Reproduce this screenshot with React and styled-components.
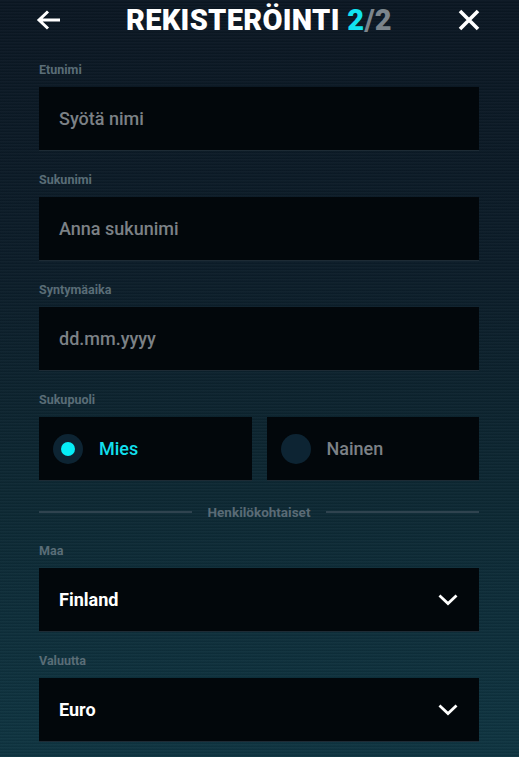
import React from "react";
import styled, { createGlobalStyle } from "styled-components";

const Global = createGlobalStyle`
  html, body { margin: 0; padding: 0; }
  body {
    width: 519px;
    height: 757px;
    overflow: hidden;
    font-family: Roboto, "Liberation Sans", sans-serif;
    background:
      repeating-linear-gradient(180deg, rgba(255,255,255,0.025) 0px, rgba(255,255,255,0.025) 1px, rgba(0,0,0,0.06) 2px, rgba(0,0,0,0.06) 3px),
      linear-gradient(180deg, #0b1723 0%, #0c1d29 35%, #0d2833 65%, #0f3542 100%);
  }
`;

const Page = styled.div`
  width: 519px;
  height: 757px;
  display: flex;
  flex-direction: column;
`;

const Header = styled.header`
  height: 40px;
  display: flex;
  align-items: center;
  justify-content: space-between;
  padding: 0 37px 0 36px;
`;

const IconButton = styled.button`
  background: none;
  border: none;
  padding: 0;
  width: 26px;
  height: 26px;
  display: flex;
  align-items: center;
  justify-content: center;
  color: #fff;
`;

const Title = styled.h1`
  margin: 0;
  font-size: 29px;
  font-weight: 900;
  color: #fff;
  letter-spacing: 0.3px;
  line-height: 1;
  margin-top: 1px;
`;

const Step = styled.span`
  color: #12e3ef;
`;

const Total = styled.span`
  color: #7b858c;
`;

const Form = styled.div`
  padding: 0 40px 0 39px;
  display: flex;
  flex-direction: column;
`;

const Field = styled.div`
  display: flex;
  flex-direction: column;
  gap: 9px;
  margin-top: ${(p) => p.$top}px;
`;

const Label = styled.label`
  font-size: 12.5px;
  font-weight: 700;
  line-height: 16px;
  color: #5a6d77;
`;

const Box = styled.div`
  height: 63px;
  background: #02070b;
  border-bottom: 1px solid #1d2b35;
  display: flex;
  align-items: center;
  padding: 0 21px 0 20px;
  box-sizing: content-box;
`;

const Text = styled.span`
  flex: 1;
  font-size: 18px;
  font-weight: ${(p) => (p.$value ? 700 : 500)};
  color: ${(p) => (p.$value ? "#ffffff" : "#7c8186")};
`;

const RadioRow = styled.div`
  display: grid;
  grid-template-columns: 1fr 1fr;
  gap: 15px;
`;

const RadioBox = styled(Box)`
  padding: 0 14px;
  gap: 16px;
`;

const Circle = styled.span`
  width: 30px;
  height: 30px;
  border-radius: 50%;
  background: #0d2433;
  display: flex;
  align-items: center;
  justify-content: center;
  &::after {
    content: "";
    display: ${(p) => (p.$on ? "block" : "none")};
    width: 14px;
    height: 14px;
    border-radius: 50%;
    background: #06eef8;
  }
`;

const RadioText = styled.span`
  font-size: 18px;
  font-weight: 500;
  color: ${(p) => (p.$on ? "#12dfec" : "#7c8186")};
`;

const Divider = styled.div`
  margin-top: 21px;
  height: 20px;
  display: flex;
  align-items: center;
  gap: 16px;
  &::before, &::after {
    content: "";
    flex: 1;
    height: 2px;
    background: #2f434f;
  }
`;

const DividerText = styled.span`
  font-size: 13.5px;
  font-weight: 700;
  color: #5a6b76;
`;

const Chevron = () => (
  <svg width="20" height="14" viewBox="0 0 20 14" fill="none">
    <path d="M2.5 3.5 L10 10.5 L17.5 3.5" stroke="#fff" strokeWidth="2.8" strokeLinecap="square" />
  </svg>
);

export default function App() {
  return (
    <Page>
      <Global />
      <Header>
        <IconButton aria-label="back">
          <svg width="26" height="22" viewBox="0 0 26 22" fill="none">
            <path d="M24 11 H4 M12 2.5 L3 11 L12 19.5" stroke="#fff" strokeWidth="3" />
          </svg>
        </IconButton>
        <Title>
          REKISTERÖINTI <Step>2</Step>
          <Total>/2</Total>
        </Title>
        <IconButton aria-label="close">
          <svg width="24" height="24" viewBox="0 0 24 24" fill="none">
            <path d="M3 3 L21 21 M21 3 L3 21" stroke="#fff" strokeWidth="3.6" />
          </svg>
        </IconButton>
      </Header>
      <Form>
        <Field $top={22}>
          <Label>Etunimi</Label>
          <Box><Text>Syötä nimi</Text></Box>
        </Field>
        <Field $top={21}>
          <Label>Sukunimi</Label>
          <Box><Text>Anna sukunimi</Text></Box>
        </Field>
        <Field $top={21}>
          <Label>Syntymäaika</Label>
          <Box><Text>dd.mm.yyyy</Text></Box>
        </Field>
        <Field $top={21}>
          <Label>Sukupuoli</Label>
          <RadioRow>
            <RadioBox>
              <Circle $on />
              <RadioText $on>Mies</RadioText>
            </RadioBox>
            <RadioBox>
              <Circle />
              <RadioText>Nainen</RadioText>
            </RadioBox>
          </RadioRow>
        </Field>
        <Divider>
          <DividerText>Henkilökohtaiset</DividerText>
        </Divider>
        <Field $top={21}>
          <Label>Maa</Label>
          <Box><Text $value>Finland</Text><Chevron /></Box>
        </Field>
        <Field $top={21}>
          <Label>Valuutta</Label>
          <Box><Text $value>Euro</Text><Chevron /></Box>
        </Field>
      </Form>
    </Page>
  );
}
